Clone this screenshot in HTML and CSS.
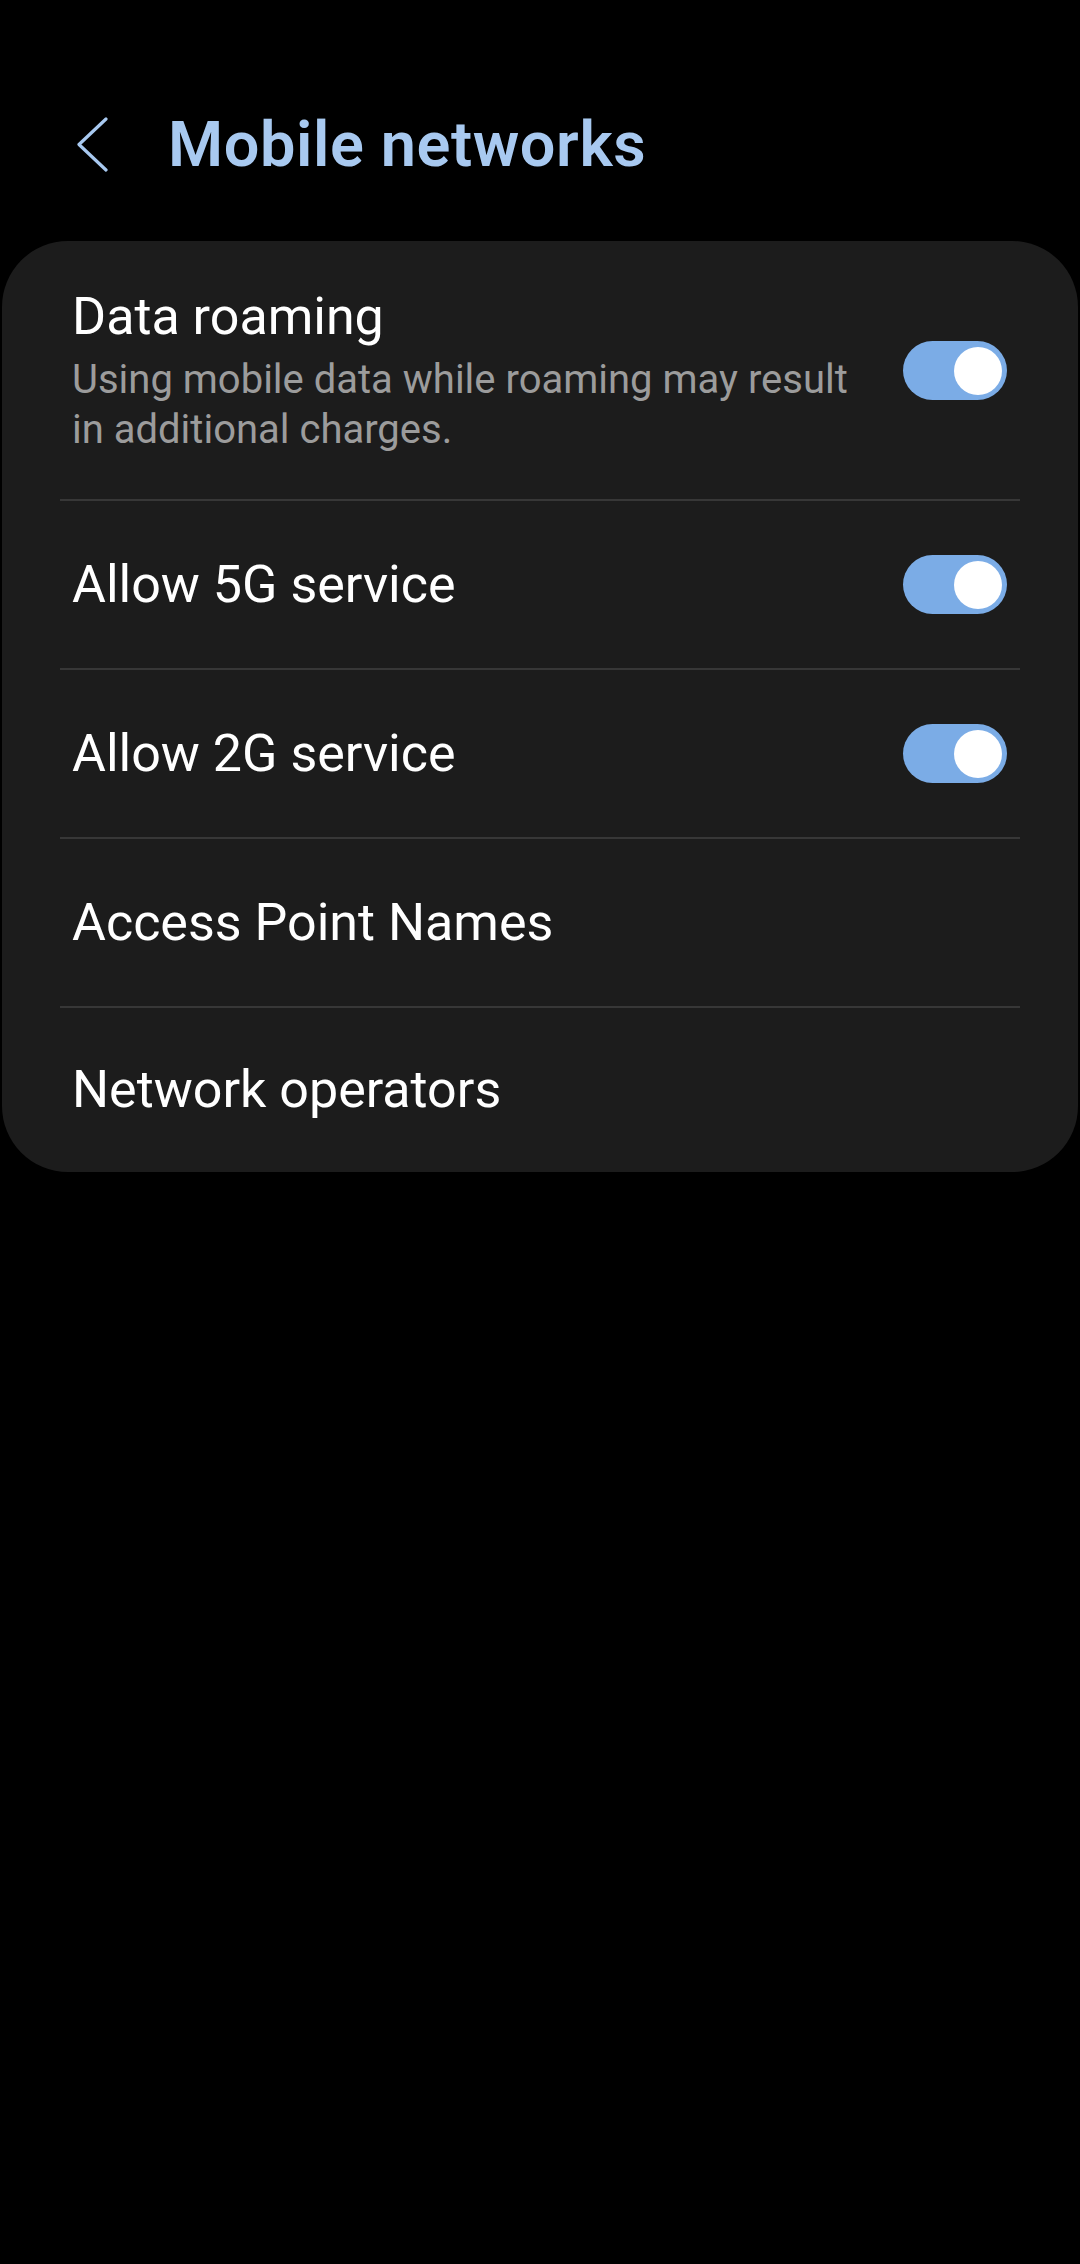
FILE: index.html
```html
<!DOCTYPE html>
<html lang="en">

<head>
    <meta charset="UTF-8">
    <meta name="viewport" content="width=device-width, initial-scale=1.0">
    <title>Mobile networks</title>
    <link rel="stylesheet" href="styles.css">
</head>

<body>

    <div class="header">
        <svg class="back" width="32" height="56" viewBox="0 0 32 56">
            <polyline points="29,2 2,27.5 29,53" fill="none" stroke="#a8c9f0" stroke-width="3.2"
                stroke-linecap="round" stroke-linejoin="round" />
        </svg>
        <h1>Mobile networks</h1>
    </div>

    <div class="card">
        <div class="row double">
            <div class="text">
                <div class="title">Data roaming</div>
                <div class="sub">Using mobile data while roaming may result in additional charges.</div>
            </div>
            <div class="switch on"><span></span></div>
        </div>

        <div class="row">
            <div class="text">
                <div class="title">Allow 5G service</div>
            </div>
            <div class="switch on"><span></span></div>
        </div>

        <div class="row">
            <div class="text">
                <div class="title">Allow 2G service</div>
            </div>
            <div class="switch on"><span></span></div>
        </div>

        <div class="row">
            <div class="text">
                <div class="title">Access Point Names</div>
            </div>
        </div>

        <div class="row last">
            <div class="text">
                <div class="title">Network operators</div>
            </div>
        </div>
    </div>

</body>

</html>
```

FILE: styles.css
```css
* {
    margin: 0;
    padding: 0;
    box-sizing: border-box;
    font-family: Roboto, "Noto Sans", sans-serif;
}

body {
    background-color: #000;
    color: #fff;
    width: 1080px;
    min-height: 2264px;
}

/* top bar */
.header {
    display: flex;
    align-items: center;
    height: 80px;
    margin-top: 105px;
    padding-left: 77px;
}

.header .back {
    display: block;
    margin-right: 59px;
}

.header h1 {
    font-size: 63px;
    line-height: 80px;
    font-weight: 600;
    letter-spacing: 0.6px;
    color: #a8c9f0;
}

/* settings card */
.card {
    margin: 56px 2px 0;
    padding: 0 58px;
    background-color: #1c1c1c;
    border-radius: 66px;
}

.row {
    display: flex;
    align-items: center;
    height: 169px;
    padding: 0 13px 0 12px;
    border-bottom: 2px solid #373737;
}

.row.double {
    height: 260px;
}

.row.last {
    height: 164px;
    border-bottom: none;
}

.text {
    flex: 1;
    padding-right: 30px;
}

.title {
    font-size: 52px;
    line-height: 62px;
}

.sub {
    margin-top: 7px;
    font-size: 40px;
    line-height: 50px;
    color: #9c9c9c;
}

/* toggle */
.switch {
    position: relative;
    width: 104px;
    height: 59px;
    border-radius: 30px;
    background-color: #555;
    flex-shrink: 0;
}

.switch.on {
    background-color: #7bace6;
}

.switch span {
    position: absolute;
    top: 6px;
    left: 5px;
    width: 48px;
    height: 48px;
    border-radius: 50%;
    background-color: #fff;
}

.switch.on span {
    left: auto;
    right: 5px;
}
```
